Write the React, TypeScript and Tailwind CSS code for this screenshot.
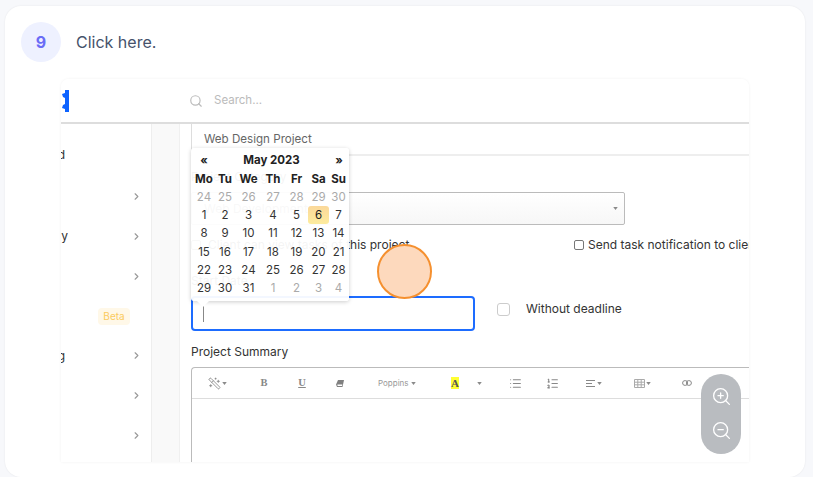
import { ChevronRight, Search, ZoomIn, ZoomOut, WandSparkles, List, ListOrdered } from "lucide-react";

const font = "font-['Inter','Liberation_Sans',sans-serif]";

function Caret({ className = "" }: { className?: string }) {
  return (
    <svg width="5" height="3" viewBox="0 0 6 4" className={className}>
      <path d="M0 0h6L3 4z" fill="#8a8a8a" />
    </svg>
  );
}

function SideRow({ text, textClass = "", chevron = true, beta = false }: { text?: string; textClass?: string; chevron?: boolean; beta?: boolean }) {
  return (
    <div className="h-[39.8px] flex items-center overflow-hidden">
      {text ? <span className={"text-[12px] text-[#333] w-[10px] overflow-hidden text-right " + textClass}>{text}</span> : null}
      <div className="ml-auto flex items-center">
        {beta ? (
          <span className="mr-[21px] w-[32px] h-[17px] rounded-[4px] bg-[#fff8e8] text-[#fbcb5f] text-[10px] flex items-center justify-center">Beta</span>
        ) : null}
        {chevron ? <ChevronRight size={11} strokeWidth={2.5} className="mr-[9px] text-[#999]" /> : null}
      </div>
    </div>
  );
}

const cols = "grid grid-cols-[20px_22px_25px_24px_23px_21px_19px] text-center";

const head = ["Mo", "Tu", "We", "Th", "Fr", "Sa", "Su"];
const days: [string, boolean][][] = [
  [["24", true], ["25", true], ["26", true], ["27", true], ["28", true], ["29", true], ["30", true]],
  [["1", false], ["2", false], ["3", false], ["4", false], ["5", false], ["6", false], ["7", false]],
  [["8", false], ["9", false], ["10", false], ["11", false], ["12", false], ["13", false], ["14", false]],
  [["15", false], ["16", false], ["17", false], ["18", false], ["19", false], ["20", false], ["21", false]],
  [["22", false], ["23", false], ["24", false], ["25", false], ["26", false], ["27", false], ["28", false]],
  [["29", false], ["30", false], ["31", false], ["1", true], ["2", true], ["3", true], ["4", true]],
];

function Calendar() {
  return (
    <div className="absolute left-[130px] top-[69px] w-[158px] h-[153px] bg-white/95 rounded-[3px] shadow-[0_1px_4px_rgba(0,0,0,0.2)] pl-[3px] pt-[3px] text-[11.5px] leading-[18.3px] text-[#333]">
      <div className="flex items-center h-[18.6px] font-bold text-[#222]">
        <span className="w-[20px] text-center">«</span>
        <span className="flex-1 text-center text-[11.5px]">May 2023</span>
        <span className="w-[20px] text-center">»</span>
      </div>
      <div className={cols + " font-bold text-[#222]"}>
        {head.map((h) => (
          <div key={h}>{h}</div>
        ))}
      </div>
      {days.map((row, i) => (
        <div key={i} className={cols}>
          {row.map(([d, muted], j) => (
            <div
              key={j}
              className={
                d === "6" && !muted
                  ? "rounded-[3px] bg-gradient-to-b from-[#fbd89a] to-[#fdec9e] text-[#222]"
                  : muted
                    ? "text-[#aaa]"
                    : ""
              }
            >
              {d}
            </div>
          ))}
        </div>
      ))}
      <div className="absolute left-[6px] -bottom-[6px] w-0 h-0 border-l-[6px] border-r-[6px] border-t-[6px] border-l-transparent border-r-transparent border-t-white" />
    </div>
  );
}

function Toolbar() {
  return (
    <div className="h-[31px] border-b border-[#ddd] flex items-center text-[#888]">
      <div className="ml-[16px] flex items-center gap-[1px] w-[16px]">
        <WandSparkles size={13} strokeWidth={1.6} className="shrink-0 -scale-x-100" />
        <Caret className="shrink-0" />
      </div>
      <span className="ml-[36px] w-[8px] text-[10.5px] leading-none font-bold font-['Liberation_Serif',serif] text-center">B</span>
      <span className="ml-[30px] w-[8px] text-[10.5px] leading-none font-bold underline font-['Liberation_Serif',serif] text-center">U</span>
      <svg width="8" height="7" viewBox="0 0 8 7" className="ml-[30px] shrink-0">
        <path d="M2 0h6L6.5 7H1L0 4.5z" fill="#808080" />
        <path d="M1.4 4.6h5L6 6H1.6z" fill="#fff" />
      </svg>
      <span className="ml-[34px] w-[39px] flex items-center gap-[2px] text-[8px] text-[#999]">
        Poppins
        <Caret />
      </span>
      <span className="ml-[34px] w-[8px] h-[12px] bg-[#ffff33] text-[#555] text-[11px] leading-[12px] font-bold font-['Liberation_Serif',serif] text-center">A</span>
      <Caret className="ml-[18px] shrink-0" />
      <List size={13} strokeWidth={2} className="ml-[27px] shrink-0" />
      <ListOrdered size={13} strokeWidth={2} className="ml-[24px] shrink-0" />
      <div className="ml-[27px] w-[16px] flex items-center gap-[2px]">
        <svg width="9" height="7" viewBox="0 0 9 7" className="shrink-0">
          <path d="M0 .5h9M0 3.5h6M0 6.5h9" stroke="#888" strokeWidth="1" />
        </svg>
        <Caret className="shrink-0" />
      </div>
      <div className="ml-[32px] w-[16px] flex items-center gap-[1px]">
        <svg width="11" height="9" viewBox="0 0 11 9" className="shrink-0">
          <path d="M.5.5h10v8H.5zM.5 3.2h10M.5 5.8h10M3.8.5v8M7.2.5v8" fill="none" stroke="#aaa" strokeWidth="1" />
        </svg>
        <Caret className="shrink-0" />
      </div>
      <svg width="10" height="6" viewBox="0 0 10 6" className="ml-[32px] shrink-0">
        <rect x=".6" y=".6" width="5" height="4.8" rx="2.4" fill="none" stroke="#888" strokeWidth="1" />
        <rect x="4.4" y=".6" width="5" height="4.8" rx="2.4" fill="none" stroke="#888" strokeWidth="1" />
      </svg>
    </div>
  );
}

function Content() {
  return (
    <div className="flex-1 min-w-0 bg-white pl-[11px] overflow-hidden border-l border-[#f0f0f0] text-[#333]">
      <div className="h-[32px] border-l border-[#ddd] border-b-2 border-b-[#eee] pl-[12px] pt-[2px] flex items-center text-[11.6px] text-[#666]">
        Web Design Project
      </div>
      <div className="h-[36px] flex items-end pb-[6px] text-[12px]">Project Category</div>
      <div className="h-[33px] w-[434px] border border-[#bbb] rounded-[2px] bg-gradient-to-b from-white to-[#f7f7f7] flex items-center pl-[12px] text-[12px] text-[#777]">
        Web Development
        <Caret className="ml-auto mr-[6px]" />
      </div>
      <div className="mt-[13px] h-[14px] flex items-center text-[12px] leading-[14px] whitespace-nowrap">
        <span className="w-[10px] h-[10px] border border-[#777] rounded-[2px] shrink-0" />
        <span className="ml-[7px] w-[366px] shrink-0">Client can view tasks of this project</span>
        <span className="w-[10px] h-[10px] border border-[#777] rounded-[2px] shrink-0" />
        <span className="ml-[4px]">Send task notification to client</span>
      </div>
      <div className="mt-[20px] h-[18px] text-[12px] leading-[18px]">Start Date</div>
      <div className="mt-[6px] flex items-center">
        <div className="w-[284px] h-[35px] border-2 border-[#1d6cff] rounded-[4px] flex items-center pl-[10px]">
          <div className="w-px h-[17px] bg-[#888]" />
        </div>
        <div className="-mt-[9px] flex items-center">
          <span className="ml-[22px] w-[13px] h-[13px] border border-[#ccc] rounded-[3px] shrink-0" />
          <span className="ml-[16px] text-[12px] text-[#333]">Without deadline</span>
        </div>
      </div>
      <div className="mt-[13px] h-[16px] text-[12px] leading-[16px]">Project Summary</div>
      <div className="mt-[7px] h-[100px] border-t border-l border-[#bbb] rounded-tl-[4px]">
        <Toolbar />
      </div>
    </div>
  );
}

export default function App() {
  return (
    <div className={"w-[813px] h-[477px] overflow-hidden bg-[#f7f8fb] pt-[6px] pl-[5px] " + font}>
      <div className="w-[800px] h-[471px] bg-white rounded-[16px] shadow-[0_0_2px_rgba(0,0,0,0.08)] pt-[16px]">
        <div className="flex items-center pl-[16px] h-[40px]">
          <div className="w-[40px] h-[40px] rounded-full bg-[#eef1ff] text-[#6a6cf6] text-[16px] font-bold flex items-center justify-center">9</div>
          <div className="ml-[15px] -mt-[1px] text-[16px] text-[#46526b]">Click here.</div>
        </div>
        <div className="relative ml-[56px] mt-[17px] w-[688px] h-[383px]">
          <div className="w-full h-full flex flex-col overflow-hidden rounded-t-[8px] shadow-[0_0_3px_rgba(0,0,0,0.06)]">
            <div className="h-[45px] shrink-0 border-b-2 border-[#ddd] flex items-center bg-white">
              <svg width="8" height="22" viewBox="0 0 8 22" className="shrink-0">
                <path d="M4 0h4v22H4v-3L1 18l1-3 2-1V8L2 7 1 4l3-1z" fill="#0d63ff" />
              </svg>
              <Search size={14} strokeWidth={2} className="ml-[120px] text-[#bbb]" />
              <span className="ml-[11px] text-[11.5px] text-[#bbb]">Search...</span>
            </div>
            <div className="flex flex-1 min-h-0">
              <div className="w-[91px] shrink-0 bg-white border-r border-[#eee] pt-[13px]">
                <SideRow text="d" textClass="-ml-[6px] -mt-[4px]" chevron={false} />
                <SideRow />
                <SideRow text="y" textClass="-ml-[3px]" />
                <SideRow />
                <SideRow chevron={false} beta />
                <SideRow text="g" textClass="-ml-[6px]" />
                <SideRow />
                <SideRow />
              </div>
              <div className="w-[27px] shrink-0 bg-[#f9f9f9]" />
              <Content />
            </div>
          </div>
          <Calendar />
          <div className="absolute left-[316px] top-[165px] w-[55px] h-[55px] rounded-full bg-[#fdd9bd] border-2 border-[#f5902f]" />
          <div className="absolute left-[640px] top-[295px] w-[40px] h-[80px] rounded-full bg-[#b9bcc0] flex flex-col items-center justify-center gap-[13px] pb-[2px] text-white">
            <ZoomIn size={21} strokeWidth={1.5} />
            <ZoomOut size={21} strokeWidth={1.5} />
          </div>
        </div>
      </div>
    </div>
  );
}
